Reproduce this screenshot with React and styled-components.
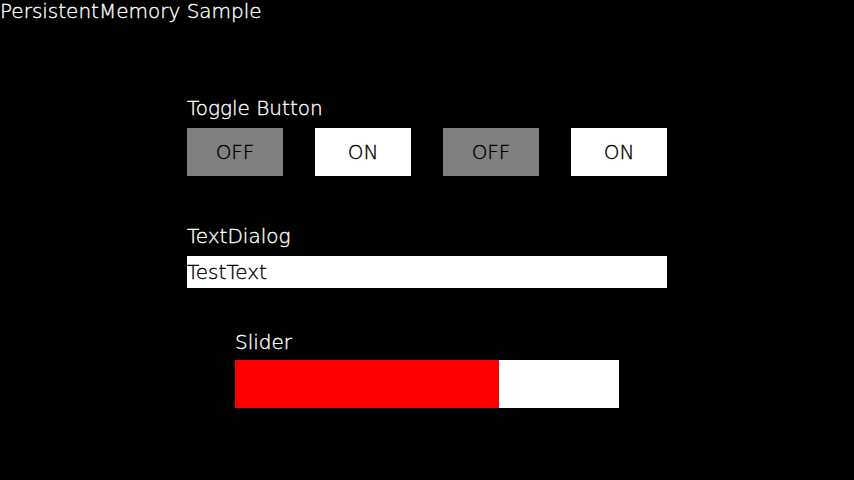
import React from 'react'
import styled, { createGlobalStyle } from 'styled-components'

const GlobalStyle = createGlobalStyle`
  html, body {
    margin: 0;
    padding: 0;
    background: #000;
  }
  body {
    font-family: 'DejaVu Sans', 'Liberation Sans', sans-serif;
    font-weight: 200;
    -webkit-text-stroke: 0.35px currentColor;
  }
`

const toggles = [false, true, false, true]

const App = () =>
  <Page>
    <GlobalStyle />
    <Title>PersistentMemory Sample</Title>
    <Panel>
      <Section>
        <Label>Toggle Button</Label>
        <ToggleRow>
          {toggles.map((on, i) =>
            <Toggle key={i} on={on ? 1 : 0}>
              {on ? 'ON' : 'OFF'}
            </Toggle>
          )}
        </ToggleRow>
      </Section>
      <Section top="48px">
        <Label>TextDialog</Label>
        <TextField>TestText</TextField>
      </Section>
      <SliderSection>
        <Label>Slider</Label>
        <Track>
          <Fill style={{ width: `${0.6875 * 100}%` }} />
        </Track>
      </SliderSection>
    </Panel>
  </Page>

export default App

const Page = styled.div`
  width: 854px;
  height: 480px;
  background: #000;
  color: #fff;
  overflow: hidden;
`

const Title = styled.div`
  font-size: 20px;
  line-height: 22px;
  color: #fff;
`

const Panel = styled.div`
  margin: 74px 0 0 187px;
  width: 480px;
  display: flex;
  flex-direction: column;
`

const Section = styled.div`
  display: flex;
  flex-direction: column;
  gap: 8px;
  margin-top: ${props => props.top || '0'};
`

const SliderSection = styled(Section)`
  margin-top: 42px;
  margin-left: 48px;
  width: 384px;
  gap: 6px;
`

const Label = styled.div`
  font-size: 20px;
  line-height: 24px;
  color: #fff;
`

const ToggleRow = styled.div`
  display: flex;
  gap: 32px;
`

const Toggle = styled.div`
  width: 96px;
  height: 48px;
  display: flex;
  align-items: center;
  justify-content: center;
  background: ${props => props.on ? '#fff' : '#808080'};
  color: #000;
  font-size: 20px;
`

const TextField = styled.div`
  height: 32px;
  background: #fff;
  color: #000;
  font-size: 20px;
  line-height: 32px;
`

const Track = styled.div`
  height: 48px;
  background: #fff;
  display: flex;
`

const Fill = styled.div`
  height: 100%;
  background: #f00;
`
